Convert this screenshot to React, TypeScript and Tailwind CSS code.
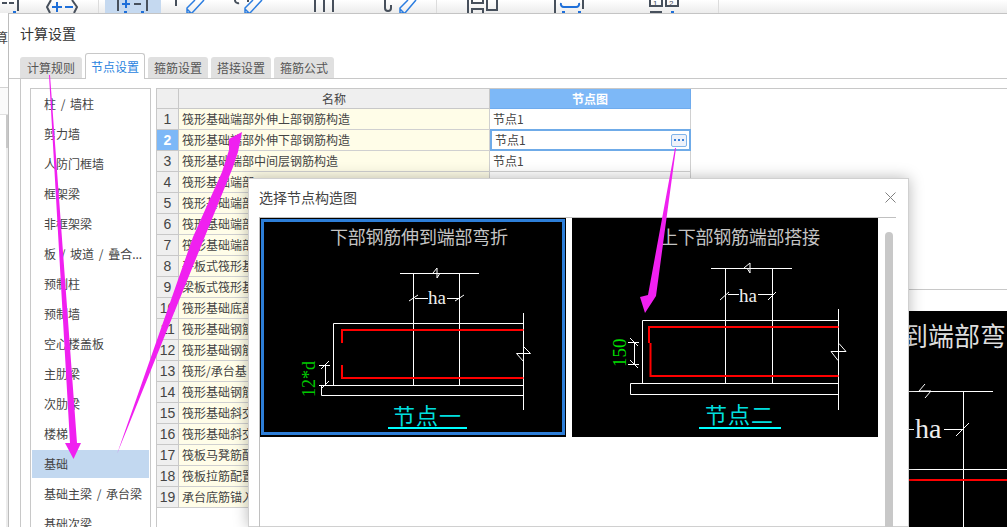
import React from "react";

const FONT = "font-['Noto_Sans_CJK_SC','Liberation_Sans',sans-serif]";
const CJK = "'Noto Sans CJK SC',sans-serif";
const LATIN = "'Liberation Serif',serif";

const categories = [
  "柱 / 墙柱",
  "剪力墙",
  "人防门框墙",
  "框架梁",
  "非框架梁",
  "板 / 坡道 / 叠合...",
  "预制柱",
  "预制墙",
  "空心楼盖板",
  "主肋梁",
  "次肋梁",
  "楼梯",
  "基础",
  "基础主梁 / 承台梁",
  "基础次梁",
];

const rows = [
  "筏形基础端部外伸上部钢筋构造",
  "筏形基础端部外伸下部钢筋构造",
  "筏形基础端部中间层钢筋构造",
  "筏形基础端部",
  "筏形基础端部",
  "筏形基础端部",
  "筏形基础端部",
  "平板式筏形基",
  "梁板式筏形基",
  "筏形基础底部",
  "筏形基础钢筋",
  "筏形基础钢筋",
  "筏形/承台基",
  "筏形基础钢筋",
  "筏形基础斜交",
  "筏形基础斜交",
  "筏板马凳筋配",
  "筏板拉筋配置",
  "承台底筋锚入",
];

const tabs = [
  { name: "计算规则", width: "w-[62px]" },
  { name: "节点设置", width: "w-[60px]" },
  { name: "箍筋设置", width: "w-[60px]" },
  { name: "搭接设置", width: "w-[60px]" },
  { name: "箍筋公式", width: "w-[60px]" },
];

function ToolbarIcons() {
  return (
    <svg width="730" height="13" viewBox="0 0 730 13" fill="none" className="shrink-0">
      <rect x="105" y="0" width="56" height="13" fill="#c5d9f0" />
      <g stroke="#47505c" strokeWidth="2">
        <path d="M2 3h5M9 3h5M18 0v11" />
        <path d="M51 0l-4 7 3 6M72 0l5 7-3 6" />
        <path d="M118 0v11M134 4h7M147 0v11" />
        <path d="M176 0v6" />
        <path d="M235 0a3 3 0 0 0 4 3M248 0v2" />
        <path d="M315 0v12M324 0v12M333 0v12" />
        <path d="M385 0v8a3 3 0 0 0 6 0V5" />
        <path d="M468 0v13M472 0v3h11V0M472 13V9h11v4M487 0v10h10V0" />
        <path d="M555 0v13M583 0v9" />
        <path d="M650 0v6h12V0M666 0v6h12V0M650 12h12" />
      </g>
      <g stroke="#1e6fd9" strokeWidth="2">
        <path d="M13 12h3" />
        <path d="M52 7h10M57 2v10M65 7h8" />
        <path d="M122 4h8M126 0v8M124 12h3M141 12h3" />
        <path d="M561 3a3 3 0 0 0 3 4h12a3 3 0 0 0 3-4M562 12h3M578 12h3M671 12h3" />
      </g>
      {/* pencil glyphs */}
      <g stroke="#2b7de0" strokeWidth="1.500">
        <path d="M187 13V8l8-8M187 13h5l12-13M187 9l4 4" />
        <path d="M245 13V8l8-8M245 13h5l12-13M245 9l4 4" />
        <path d="M400 13V8l8-8M400 13h5l11-13M400 9l4 4" />
      </g>
      <text x="653" y="6" fontSize="8" fill="#47505c" fontFamily="'Liberation Sans',sans-serif">1</text>
      <text x="669" y="6" fontSize="8" fill="#47505c" fontFamily="'Liberation Sans',sans-serif">2</text>
      <g stroke="#dcdcdc">
        <path d="M98.500 0v13M436.500 0v13M718.500 0v13" />
      </g>
    </svg>
  );
}

function LeftStrip() {
  return (
    <div className="w-[9px] shrink-0 bg-white border-r border-[#bdbdbd] overflow-hidden text-[#444] text-[13px] leading-none">
      <div className="h-[75px] border-b border-[#d2d2d2] relative">
        <span className="absolute left-[-5px] top-[17px]">算</span>
      </div>
      <div className="h-[27px] bg-[#fafafa] border-b border-[#e0e0e0]" />
      <div className="ml-[6px] h-[33px] bg-[#c8c8c8]" />
      <div className="ml-[6px] h-[380px] bg-[#ececec]" />
    </div>
  );
}

function CategoryList() {
  return (
    <div className="w-[121px] h-[440px] mt-[9px] ml-[9px] shrink-0 border-t border-x border-[#c8c8c8] overflow-hidden text-[12px] text-[#444]">
      <ul className="flex flex-col pt-[1px] pl-[1px] pr-[1px]">
        {categories.map((name) => (
          <li
            key={name}
            className={`h-[28px] mb-[2px] pl-[12px] flex items-center whitespace-nowrap [word-spacing:2px] ${
              name === "基础" ? "bg-[#c2d8f0]" : ""
            }`}
          >
            {name}
          </li>
        ))}
      </ul>
    </div>
  );
}

function NodeTable() {
  return (
    <div className="flex-1 h-[440px] mt-[9px] ml-[5px] border-t border-l border-[#c8c8c8] text-[12px] text-[#444]">
      <div className="flex h-[20px]">
        <div className="w-[22px] bg-[#efefef] border-r border-b border-[#c8c8c8]" />
        <div className="w-[311px] bg-[#efefef] border-r border-b border-[#c8c8c8] text-center leading-[19px]">
          名称
        </div>
        <div className="w-[201px] bg-[#7db8f7] border-b border-r border-[#6fabed] text-white font-bold text-center leading-[19px]">
          节点图
        </div>
      </div>
      {rows.map((name, i) => {
        const active = i === 1;
        return (
          <div key={i} className="flex h-[21px]">
            <div
              className={`w-[22px] border-r border-b border-[#c8c8c8] text-center text-[14px] leading-[20px] font-['Liberation_Sans',sans-serif] ${
                active ? "bg-[#7db8f7] text-white font-bold" : "bg-[#efefef]"
              }`}
            >
              {i + 1}
            </div>
            <div className="w-[311px] bg-[#fffde8] border-r border-b border-[#d0d0d0] pl-[3px] leading-[20px] whitespace-nowrap overflow-hidden">
              {name}
            </div>
            {active ? (
              <div className="w-[201px] -mt-px h-[22px] bg-white border-2 border-[#6fabe8] pl-[3px] pr-[2px] flex items-center justify-between">
                <span>节点1</span>
                <span className="w-[16px] h-[13px] rounded-[2px] border border-[#80b4ea] bg-[#eef2fa] flex items-center justify-center gap-[2px]">
                  <i className="w-[2px] h-[2px] bg-[#3a80d8]" />
                  <i className="w-[2px] h-[2px] bg-[#3a80d8]" />
                  <i className="w-[2px] h-[2px] bg-[#3a80d8]" />
                </span>
              </div>
            ) : (
              <div className="w-[201px] bg-white border-r border-b border-[#d0d0d0] pl-[3px] leading-[20px]">
                {i < 3 ? "节点1" : ""}
              </div>
            )}
          </div>
        );
      })}
    </div>
  );
}

function NodeOne() {
  return (
    <svg viewBox="0 0 306 219" width="306" height="219" className="block shrink-0">
      <rect width="306" height="219" fill="#000" />
      <rect x="2.500" y="2.500" width="301" height="213" fill="none" stroke="#2d7ed8" strokeWidth="3" />
      <g transform="translate(1 0)">
        <text x="69" y="26" fill="#c4c4c4" fontSize="18" fontFamily={CJK} textLength="178">下部钢筋伸到端部弯折</text>
        <g stroke="#fff" fill="none">
          <path d="M139 55.500h79M152.500 55v112M198.500 55v112" />
          <path d="M72.500 167V105.500H262.500M262.500 95v97" />
          <path d="M60.500 167.500h202v10h-202z" />
          <path d="M148 83l9-6M194 83l9-6M154 80.500h13M186 80.500h12" />
          <path d="M64.500 147v20M58 147.500h11M58 167.500h11M60 151l8-8M60 171l8-8" />
          <path d="M172 55l4-5v10l3-5" />
          <path d="M262.500 128.500l7 7h-14l7 8" />
        </g>
        <text x="167" y="86" fill="#eee" fontSize="19" fontFamily={LATIN}>ha</text>
        <path d="M81 125v-13h181.500M81 147v13h181.500" stroke="#f00" strokeWidth="2" fill="none" />
        <text transform="translate(54,179) rotate(-90)" fill="#00c800" fontSize="18" fontFamily={LATIN}>12*d</text>
        <text x="132" y="206" fill="#00dede" fontSize="22" fontFamily={CJK} letterSpacing="1">节点一</text>
        <path d="M127 210h79" stroke="#0ff" strokeWidth="2" />
      </g>
    </svg>
  );
}

function NodeTwo() {
  return (
    <svg viewBox="0 0 306 219" width="306" height="219" className="block shrink-0">
      <rect width="306" height="219" fill="#000" />
      <text x="88" y="26" fill="#c4c4c4" fontSize="18" fontFamily={CJK} textLength="160">上下部钢筋端部搭接</text>
      <g stroke="#fff" fill="none">
        <path d="M139 50.500h81M153.500 50v115M200.500 50v115" />
        <path d="M70.500 165V102.500H266.500M266.500 91v101" />
        <path d="M58.500 165.500h208v11h-208z" />
        <path d="M148 82l9-8M196 82l8-8M156 76.500h11M186 76.500h14" />
        <path d="M62.500 124v22M56 124.500h11M56 146.500h11M58 120l8 8M58 142l8 8" />
        <path d="M172 50l6-5v10l-3-5" />
        <path d="M267 125.500l7 8h-15l7 9" />
      </g>
      <text x="167" y="84" fill="#eee" fontSize="19" fontFamily={LATIN}>ha</text>
      <path d="M77 125v-16h189.500" stroke="#f00" strokeWidth="2" fill="none" />
      <path d="M78.500 125v33h188" stroke="#f00" strokeWidth="2" fill="none" />
      <text transform="translate(54,149) rotate(-90)" fill="#00dc00" fontSize="19" fontFamily={LATIN}>150</text>
      <text x="133" y="205" fill="#00dede" fontSize="22" fontFamily={CJK} letterSpacing="1">节点二</text>
      <path d="M127 210h82" stroke="#0ff" strokeWidth="2" />
    </svg>
  );
}

function BigPreview() {
  return (
    <svg viewBox="0 0 99 216" width="99" height="216" className="block">
      <rect width="99" height="216" fill="#000" />
      <text x="-6" y="35" fill="#ddd" fontSize="26" fontFamily={CJK}>到端部弯</text>
      <path d="M0 80.500h85M55.500 80v136M0 158.500h99M17 73l-6 7h12l-6 7" stroke="#fff" fill="none" />
      <path d="M0 169h99" stroke="#f00" strokeWidth="2" />
      <path d="M0 118.500h6M36 118.500h19M48 125l13-13" stroke="#fff" fill="none" />
      <text x="7" y="127" fill="#eee" fontSize="28" fontFamily={LATIN}>ha</text>
    </svg>
  );
}

// hand-drawn magenta arrows lying over the windows
function Arrows() {
  return (
    <svg width="1007" height="527" viewBox="0 0 1007 527" className="absolute left-0 top-0 pointer-events-none">
      <path d="M49 75h1l27 368h4l-7.500 16L65 443h5z" fill="#f020f0" />
      <path d="M117 454l76-217 29-65 7-22v-11l13-7-4 20-5 15z" fill="#f020f0" />
      <path d="M675 148h1l-20 148-11 17-5-16 8-2z" fill="#f020f0" />
    </svg>
  );
}

export default function App() {
  return (
    <div className={`relative w-[1007px] h-[527px] overflow-hidden bg-white ${FONT}`}>
      <div className="h-[13px] flex bg-gradient-to-b from-white to-[#ececec]">
        <ToolbarIcons />
      </div>
      <div className="flex h-[514px]">
        <LeftStrip />
        {/* settings dialog */}
        <div className="flex-1 bg-white border-t border-[#c4c4c4] overflow-hidden">
          <div className="h-[39px] pl-[11px] pt-[9px] text-[14px] leading-[20px] text-[#333]">计算设置</div>
          <div className="flex items-end h-[26px] pl-[11px] gap-[3px] border-b border-[#c8c8c8] text-[12px]">
            {tabs.map((tab) =>
              tab.name === "节点设置" ? (
                <div
                  key={tab.name}
                  className={`${tab.width} h-[26px] -mb-px bg-white border border-b-0 border-[#c8c8c8] rounded-t-[3px] text-[#2a84e0] text-center leading-[26px]`}
                >
                  {tab.name}
                </div>
              ) : (
                <div
                  key={tab.name}
                  className={`${tab.width} h-[21px] bg-[#e0e0e0] rounded-t-[3px] text-[#555] text-center leading-[22px]`}
                >
                  {tab.name}
                </div>
              ),
            )}
          </div>
          <div className="flex border-l border-[#c8c8c8] ml-[11px]">
            <CategoryList />
            <NodeTable />
          </div>
        </div>
      </div>

      {/* preview window behind the picker */}
      <div className="absolute left-[908px] top-[289px] w-[99px] h-[238px] border-t border-[#c8c8c8] pt-[21px] bg-white">
        <BigPreview />
      </div>

      {/* node picker window */}
      <div className="absolute left-[248px] top-[178px] w-[661px] h-[349px] bg-white border border-[#d0d0d0] shadow-[0_0_14px_rgba(0,0,0,0.28)]">
        <div className="h-[38px] pb-[2px] flex items-center justify-between pl-[10px] pr-[12px] text-[14px] text-[#444]">
          <span>选择节点构造图</span>
          <svg width="11" height="11" viewBox="0 0 11 11" stroke="#808080" fill="none">
            <path d="M.5.500l10 10M10.500.500l-10 10" />
          </svg>
        </div>
        <div className="ml-[10px] mr-[12px] border-t border-l border-[#c0c0c0] flex gap-[6px] relative h-[310px]">
          <NodeOne />
          <NodeTwo />
          <div className="absolute right-[3px] top-[14px] w-[8px] h-[320px] rounded-[4px] bg-[#c8c8c8]" />
        </div>
      </div>
      <Arrows />
    </div>
  );
}
